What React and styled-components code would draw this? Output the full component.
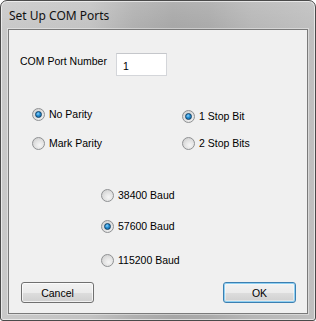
import React, { useState } from 'react'
import styled, { createGlobalStyle, css } from 'styled-components'

const GlobalStyle = createGlobalStyle`
  html, body {
    margin: 0;
    padding: 0;
    background: #ffffff;
  }
  body {
    font-family: "Liberation Sans", Arial, sans-serif;
  }
`

const Window = styled.div`
  box-sizing: border-box;
  width: 316px;
  height: 321px;
  display: flex;
  flex-direction: column;
  padding: 0 7px 6px 7px;
  border: 1px solid #4a4a4a;
  border-radius: 7px 7px 3px 3px;
  box-shadow: inset 0 0 0 1px rgba(255, 255, 255, 0.6);
  background:
    linear-gradient(to bottom, rgba(255, 255, 255, 0.12) 0%, rgba(255, 255, 255, 0) 28px),
    linear-gradient(to right, #c9c9c9 0%, #c3c3c3 28%, #b0b0b0 42%, #a7a7a7 55%, #aaaaaa 66%, #b7b7b7 80%, #bfbfbf 100%);
`

const TitleBar = styled.div`
  height: 28px;
  display: flex;
  align-items: center;
  padding-left: 1px;
  padding-top: 1px;
  box-sizing: border-box;
  font-family: "Noto Sans", "Open Sans", sans-serif;
  font-size: 12px;
  color: #111;
`

const Client = styled.div`
  flex: 1;
  display: flex;
  flex-direction: column;
  background: #f0f0f0;
  border: 1px solid #7a7a7a;
  box-shadow: 0 0 0 1px rgba(255, 255, 255, 0.4);
  font-size: 10.5px;
  color: #000;
`

const PortRow = styled.div`
  display: flex;
  align-items: flex-start;
  margin-top: 23px;
  padding-left: 11px;
`

const Label = styled.label`
  width: 96px;
  padding-top: 2px;
  line-height: 13px;
`

const TextBox = styled.input`
  box-sizing: border-box;
  width: 51px;
  height: 23px;
  margin: 0;
  padding: 2px 6px 0 6px;
  border: 1px solid #d4d6da;
  border-top-color: #c5c7cb;
  background: #fff;
  font-family: "Liberation Sans", Arial, sans-serif;
  font-size: 10.5px;
  color: #000;
  outline: none;
`

const OptionGrid = styled.div`
  display: grid;
  grid-template-columns: 150px 1fr;
  row-gap: 16px;
  margin-top: 32px;
  padding-left: 23px;
`

const BaudGroup = styled.div`
  display: flex;
  flex-direction: column;
  margin-top: 39px;
  padding-left: 92px;
`

const Option = styled.label`
  display: flex;
  align-items: center;
  gap: 4px;
  height: 13px;
  line-height: 13px;
  margin-top: ${p => p.$top || 0}px;
  position: relative;
  top: ${p => p.$nudge || 0}px;
  cursor: default;
`

const Dot = styled.span`
  box-sizing: border-box;
  width: 13px;
  height: 13px;
  border-radius: 50%;
  flex: none;
  border: 1px solid #8f9193;
  background: radial-gradient(circle at 60% 65%, #f6f6f6 0%, #e3e3e3 45%, #c9c9c9 100%);
  display: flex;
  align-items: center;
  justify-content: center;
  ${p => p.$checked && css`
    &::after {
      content: '';
      width: 7px;
      height: 7px;
      box-sizing: border-box;
      border-radius: 50%;
      border: 1px solid #0f3f66;
      background: radial-gradient(circle at 40% 35%, #8fd3ff 0%, #2a93d6 40%, #0b5a97 100%);
    }
  `}
`

const ButtonRow = styled.div`
  display: flex;
  justify-content: space-between;
  margin-top: 15px;
  padding: 0 11px 0 12px;
`

const Button = styled.button`
  box-sizing: border-box;
  width: 73px;
  height: 21px;
  margin: 0;
  padding: 0;
  border: 1px solid #707070;
  border-radius: 3px;
  font-family: "Liberation Sans", Arial, sans-serif;
  font-size: 10.5px;
  color: #000;
  background: linear-gradient(to bottom, #f2f2f2 0%, #ebebeb 50%, #dddddd 51%, #cfcfcf 100%);
  box-shadow: inset 0 0 0 1px rgba(255, 255, 255, 0.7);
  ${p => p.$default && css`
    border-color: #3c7fb1;
    box-shadow: inset 0 0 0 1px #8fd0f2, inset 0 0 0 2px rgba(255, 255, 255, 0.4);
  `}
`

function Radio({ label, checked, onSelect, top, nudge }) {
  return (
    <Option $top={top} $nudge={nudge} onClick={onSelect}>
      <Dot $checked={checked} />
      <span>{label}</span>
    </Option>
  )
}

export default function App() {
  const [parity, setParity] = useState('none')
  const [stop, setStop] = useState(1)
  const [baud, setBaud] = useState(57600)

  return (
    <>
      <GlobalStyle />
      <Window>
        <TitleBar>Set Up COM Ports</TitleBar>
        <Client>
          <PortRow>
            <Label>COM Port Number</Label>
            <TextBox defaultValue="1" />
          </PortRow>
          <OptionGrid>
            <Radio label="No Parity" checked={parity === 'none'} onSelect={() => setParity('none')} />
            <Radio label="1 Stop Bit" nudge={2} checked={stop === 1} onSelect={() => setStop(1)} />
            <Radio label="Mark Parity" checked={parity === 'mark'} onSelect={() => setParity('mark')} />
            <Radio label="2 Stop Bits" checked={stop === 2} onSelect={() => setStop(2)} />
          </OptionGrid>
          <BaudGroup>
            <Radio label="38400 Baud" checked={baud === 38400} onSelect={() => setBaud(38400)} />
            <Radio label="57600 Baud" top={18} checked={baud === 57600} onSelect={() => setBaud(57600)} />
            <Radio label="115200 Baud" top={21} checked={baud === 115200} onSelect={() => setBaud(115200)} />
          </BaudGroup>
          <ButtonRow>
            <Button>Cancel</Button>
            <Button $default>OK</Button>
          </ButtonRow>
        </Client>
      </Window>
    </>
  )
}
